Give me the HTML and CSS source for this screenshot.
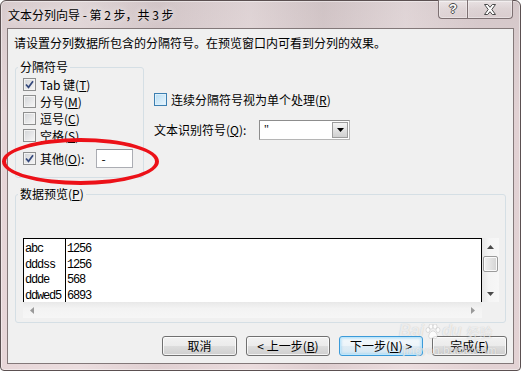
FILE: index.html
```html
<!DOCTYPE html>
<html lang="zh-CN">
<head>
<meta charset="utf-8">
<title>文本分列向导</title>
<link rel="stylesheet" href="styles.css">
</head>
<body>
<div class="window">
  <div class="titlebar">
    <div class="title">文本分列向导 - 第 2 步，共 3 步</div>
    <div class="caption-btns">
      <div class="cbtn help"><span class="q">?</span></div>
      <div class="cbtn close">
        <svg width="14" height="11" viewBox="0 0 14 11"><path d="M1.5 0.5h3.2L7 3.3 9.3 0.5h3.2L8.8 5.5l3.7 5h-3.2L7 7.7 4.7 10.5H1.5l3.7-5z" fill="#fff" stroke="#4a4a4a" stroke-width="1"/></svg>
      </div>
    </div>
  </div>
  <div class="client">
    <p class="intro">请设置分列数据所包含的分隔符号。在预览窗口内可看到分列的效果。</p>
    <div class="mid">
      <fieldset class="group delims">
        <legend>分隔符号</legend>
        <div class="chk"><span class="box"><svg class="tick" width="11" height="11" viewBox="0 0 11 11"><path d="M2 5.5L4.5 8.3L9 2.2" fill="none" stroke="#34487c" stroke-width="1.7"/></svg></span><span class="lat">Tab&nbsp;</span>键(<u>T</u>)</div>
        <div class="chk"><span class="box"></span>分号(<u>M</u>)</div>
        <div class="chk"><span class="box"></span>逗号(<u>C</u>)</div>
        <div class="chk"><span class="box"></span>空格(<u>S</u>)</div>
        <div class="chk other"><span class="box"><svg class="tick" width="11" height="11" viewBox="0 0 11 11"><path d="M2 5.5L4.5 8.3L9 2.2" fill="none" stroke="#34487c" stroke-width="1.7"/></svg></span>其他(<u>O</u>):<span class="textbox">-</span></div>
      </fieldset>
      <div class="opts">
        <div class="chk"><span class="box hot"></span>连续分隔符号视为单个处理(<u>R</u>)</div>
        <div class="qualifier">
          <span class="qlabel">文本识别符号(<u>Q</u>):</span>
          <div class="combo"><span class="val">"</span><span class="drop"><svg width="7" height="4" viewBox="0 0 7 4"><path d="M0 0h7L3.5 4z" fill="#000"/></svg></span></div>
        </div>
      </div>
    </div>
    <fieldset class="group preview-group">
      <legend>数据预览(<u>P</u>)</legend>
      <div class="preview">
        <div class="list">
          <div class="col c1"><div>abc</div><div>dddss</div><div>ddde</div><div>ddwed5</div></div>
          <div class="col c2"><div>1256</div><div>1256</div><div>568</div><div>6893</div></div>
        </div>
        <div class="vscroll">
          <span class="arrow"><svg width="7" height="4" viewBox="0 0 7 4"><path d="M0 4h7L3.5 0z" fill="#4a4a4a"/></svg></span>
          <span class="thumb"></span>
          <span class="arrow down"><svg width="7" height="4" viewBox="0 0 7 4"><path d="M0 0h7L3.5 4z" fill="#4a4a4a"/></svg></span>
        </div>
        <div class="hscroll">
          <span class="harrow"><svg width="4" height="7" viewBox="0 0 4 7"><path d="M4 0v7L0 3.5z" fill="#9a9a9a"/></svg></span>
          <span class="harrow"><svg width="4" height="7" viewBox="0 0 4 7"><path d="M0 0v7L4 3.5z" fill="#9a9a9a"/></svg></span>
        </div>
        <div class="corner"></div>
      </div>
    </fieldset>
    <div class="buttons">
      <div class="btn w75">取消</div>
      <div class="btn w84">&lt; 上一步(<u>B</u>)</div>
      <div class="btn w84 focus">下一步(<u>N</u>) &gt;</div>
      <div class="btn w75">完成(<u>F</u>)</div>
    </div>
  </div>
  <div class="ellipse"></div>
  <div class="watermark">
    <div class="wm-top"><span class="bai">Bai</span><svg width="16" height="15" viewBox="0 0 16 15"><g fill="rgba(255,255,255,0.8)" stroke="rgba(120,120,120,0.35)" stroke-width="0.6"><ellipse cx="3" cy="6" rx="2" ry="2.5"/><ellipse cx="6" cy="2.5" rx="2" ry="2.5"/><ellipse cx="10" cy="2.5" rx="2" ry="2.5"/><ellipse cx="13" cy="6" rx="2" ry="2.5"/><path d="M8 7c-3 0-5 5-4 6.5s2.5 0.5 4 0.5 3 1 4-0.5-1-6.5-4-6.5z"/></g></svg><span class="du">du</span><span class="jy">经验</span></div>
    <div class="wm-url">jingyan.baidu.com</div>
  </div>
</div>
</body>
</html>
```

FILE: styles.css
```css
* { box-sizing: border-box; }
html, body { margin: 0; padding: 0; }
body {
  width: 521px;
  height: 371px;
  overflow: hidden;
  background: #ffffff;
  font-family: "Noto Sans CJK SC", "Noto Sans", sans-serif;
  font-size: 12px;
  color: #000;
}
u { text-decoration: underline; text-underline-offset: 1px; }

.window {
  position: relative;
  width: 521px;
  height: 371px;
  border: 1px solid #5b5051;
  border-radius: 6px 6px 4px 4px;
  padding: 0 6px 6px;
  display: flex;
  flex-direction: column;
  background:
    linear-gradient(90deg, rgba(255,255,255,0) 0%, rgba(255,255,255,0.18) 15%, rgba(0,0,0,0.03) 30%, rgba(255,255,255,0.14) 48%, rgba(0,0,0,0.04) 62%, rgba(255,255,255,0.16) 78%, rgba(0,0,0,0.02) 92%),
    linear-gradient(#d8cbcd, #e5d5d7 30%, #e7d6d8);
  box-shadow: inset 0 0 0 1px rgba(255,255,255,0.45);
}

.titlebar {
  height: 27px;
  display: flex;
  justify-content: space-between;
  align-items: center;
}
.title {
  padding-left: 1px;
  line-height: 14px;
  font-size: 12px;
  text-shadow: 0 0 6px rgba(255,255,255,0.9);
}
.caption-btns {
  align-self: flex-start;
  margin-top: -1px;
  margin-right: 1px;
  display: flex;
  height: 19px;
}
.cbtn {
  height: 19px;
  border: 1px solid #7d7072;
  border-top: none;
  background: linear-gradient(rgba(255,255,255,0.5), rgba(255,255,255,0.2) 50%, rgba(255,255,255,0.08));
  box-shadow: inset 0 0 0 1px rgba(255,255,255,0.35);
  display: flex;
  align-items: center;
  justify-content: center;
}
.help { width: 29px; border-radius: 0 0 0 4px; border-right: none; }
.close { width: 46px; border-radius: 0 0 4px 0; }
.q {
  font-family: "Liberation Sans", sans-serif;
  font-weight: bold;
  font-size: 13px;
  line-height: 14px;
  color: #fff;
  text-shadow: 1px 0 #4a4a4a, -1px 0 #4a4a4a, 0 1px #4a4a4a, 0 -1px #4a4a4a;
}

.client {
  flex: 1;
  border: 1px solid #837879;
  background: #f0f0f0;
  padding: 0 7px;
  display: flex;
  flex-direction: column;
}
.client > * { flex-shrink: 0; }
.intro {
  margin: 7px 0 0 -1px;
  line-height: 14px;
}

.mid {
  display: flex;
  align-items: flex-start;
  gap: 10px;
  margin-top: 10px;
}

fieldset.group {
  margin: 0;
  min-width: 0;
  border: 1px solid #d5dfe5;
  border-radius: 3px;
}
fieldset.group legend {
  padding: 0 2px;
  margin-left: -5px;
  line-height: 14px;
}

fieldset.delims {
  width: 129px;
  padding: 2px 6px 9px 7px;
}
.chk {
  display: flex;
  align-items: center;
  height: 17px;
  white-space: nowrap;
  line-height: 14px;
}
.box {
  position: relative;
  flex: none;
  width: 13px;
  height: 13px;
  margin-right: 4px;
  border: 1px solid #8e8f8f;
  background: linear-gradient(135deg, #d2d4d7, #f7f7f7);
  box-shadow: inset 0 0 0 1px #f3f3f3;
  display: flex;
  align-items: center;
  justify-content: center;
}
.box.hot {
  border-color: #3c7fb1;
  background: linear-gradient(135deg, #b6dcf3, #eaf6fd);
  box-shadow: inset 0 0 0 1px #def0fb;
}
.tick { display: block; }
.lat { white-space: pre; }

.other {
  height: 19px;
  margin-top: 5px;
}
.textbox {
  width: 37px;
  height: 19px;
  margin-left: 12px;
  border: 1px solid #abadb3;
  border-top-color: #8f9299;
  background: #fff;
  padding-left: 4px;
  line-height: 17px;
}

.opts {
  display: flex;
  flex-direction: column;
  margin-top: 31px;
}
.qualifier {
  display: flex;
  align-items: center;
  margin-top: 12px;
  height: 20px;
}
.qlabel { width: 105px; line-height: 14px; }
.combo {
  width: 91px;
  height: 20px;
  border: 1px solid #8d8d8d;
  border-right-color: #b5b5b5;
  border-bottom-color: #b5b5b5;
  background: #fff;
  display: flex;
  align-items: stretch;
  justify-content: space-between;
}
.val {
  padding: 1px 0 0 4px;
  font-family: "Liberation Serif", serif;
  font-size: 12px;
  line-height: 14px;
}
.drop {
  width: 16px;
  margin: 1px;
  border: 1px solid #9c9c9c;
  background: linear-gradient(#f4f4f4, #e2e2e2 50%, #d0d0d0);
  display: flex;
  align-items: center;
  justify-content: center;
}

fieldset.preview-group {
  margin-top: 9px;
  padding: 37px 6px 4px 7px;
}
.preview {
  display: grid;
  grid-template-columns: 459px 17px;
  grid-template-rows: 64px 16px;
}
.list {
  border: 1px solid #000;
  border-bottom: none;
  background: #fff;
  display: flex;
  overflow: hidden;
  font-family: "Liberation Mono", monospace;
  font-size: 12px;
  letter-spacing: -1.2px;
}
.col { padding-top: 3px; }
.col div { height: 15.6px; line-height: 15px; white-space: nowrap; }
.c1 { width: 42px; padding-left: 1px; border-right: 1px solid #000; }
.c2 { padding-left: 1px; }

.vscroll {
  background: linear-gradient(90deg, #e6e6e6, #f4f4f4 40%, #f7f7f7);
  display: flex;
  flex-direction: column;
  align-items: center;
}
.arrow {
  height: 17px;
  width: 100%;
  display: flex;
  align-items: center;
  justify-content: center;
}
.arrow.down { margin-top: auto; }
.thumb {
  width: 15px;
  height: 16px;
  margin-top: 1px;
  border: 1px solid #9b9b9b;
  border-radius: 2px;
  background: linear-gradient(90deg, #f1f1f1, #e3e3e3 50%, #d4d4d4);
  box-shadow: inset 0 0 0 1px #fafafa;
}
.hscroll {
  background: linear-gradient(#e8e8e8, #f3f3f3 40%, #f6f6f6);
  display: flex;
  align-items: center;
  justify-content: space-between;
  padding: 0 7px;
}
.harrow { display: flex; }
.corner { background: #f0f0f0; }

.buttons {
  display: flex;
  justify-content: flex-end;
  gap: 9px;
  margin: 13px -1px 0 0;
}
.btn {
  height: 20px;
  border: 1px solid #707070;
  border-radius: 3px;
  background: linear-gradient(#f2f2f2 0%, #ebebeb 50%, #dddddd 50%, #cfcfcf 100%);
  box-shadow: inset 0 0 0 1px rgba(255,255,255,0.75);
  display: flex;
  align-items: center;
  justify-content: center;
  line-height: 14px;
  white-space: nowrap;
}
.w75 { width: 75px; }
.w84 { width: 84px; }
.btn.focus {
  border-color: #3c9bd9;
  background: linear-gradient(#f4f9fc 0%, #ecf4f9 50%, #dfecf4 50%, #d6e7f2 100%);
  box-shadow: inset 0 0 0 1px #bfe6fb, inset 0 0 2px 2px rgba(120,200,240,0.35);
}

.ellipse {
  position: absolute;
  left: 1px;
  top: 137px;
  width: 157px;
  height: 47px;
  border: 4px solid #ec1118;
  border-radius: 50%;
  pointer-events: none;
}

.watermark {
  position: absolute;
  left: 398px;
  top: 321px;
  pointer-events: none;
  color: rgba(255,255,255,0.7);
  text-shadow: 0 0 1px rgba(110,110,110,0.4);
}
.wm-top {
  display: flex;
  align-items: center;
  gap: 1px;
  height: 18px;
}
.bai, .du {
  font-family: "Liberation Sans", sans-serif;
  font-weight: bold;
  font-size: 16px;
  line-height: 18px;
  font-style: italic;
}
.jy { font-size: 13px; margin-left: 4px; }
.wm-url {
  font-family: "Liberation Sans", sans-serif;
  font-size: 11px;
  line-height: 12px;
  margin-top: 4px;
  margin-left: 4px;
  letter-spacing: 0.3px;
}
```
